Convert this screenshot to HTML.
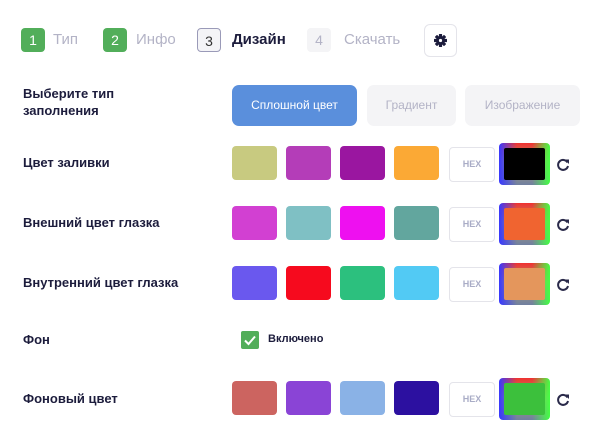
<!DOCTYPE html><html><head><meta charset="utf-8"><style>
body{margin:0;width:600px;height:432px;background:#fff;font-family:"Liberation Sans",sans-serif;position:relative;overflow:hidden}
.a{position:absolute}
.st{width:24px;height:24px;border-radius:4px;color:#fff;font-size:14px;text-align:center;line-height:24px;box-sizing:border-box}
.sl{font-size:15px;color:#b3b3c6;line-height:24px}
.lab{position:absolute;left:23px;font-size:13px;font-weight:bold;color:#1c1c3c}
.sw{position:absolute;width:45px;height:34px;border-radius:4px}
.hex{position:absolute;width:44px;height:33px;border:1px solid #e4e4ea;border-radius:4px;font-size:9px;font-weight:bold;color:#a9acc6;text-align:center;line-height:33px}
.gr{position:absolute;width:51px;height:42px;border-radius:4px;background:linear-gradient(to right,#3838ff,rgba(0,0,0,0) 35%,rgba(0,0,0,0) 65%,#44ff44),linear-gradient(to bottom,#f03030,#b0a070 45%,#7080a0)}
.gr div{position:absolute;left:5px;top:5px;width:41px;height:32px;border-radius:2px}
.rf{position:absolute;width:14px;height:14px}
.btn{position:absolute;height:41px;border-radius:7px;font-size:12px;text-align:center;line-height:41px}
</style></head><body>
<div class="a st" style="left:21px;top:28px;background:#52ae5a">1</div><div class="a sl" style="left:53px;top:28px">Тип</div>
<div class="a st" style="left:103px;top:28px;background:#52ae5a">2</div><div class="a sl" style="left:136px;top:28px">Инфо</div>
<div class="a st" style="left:197px;top:28px;background:#f4f4f7;border:1.5px solid #9a9ab8;color:#333">3</div><div class="a sl" style="left:232px;top:28px;color:#1c1c3c;font-weight:bold">Дизайн</div>
<div class="a st" style="left:307px;top:28px;background:#f4f4f6;color:#b3b3c6">4</div><div class="a sl" style="left:344px;top:28px">Скачать</div>
<div class="a" style="left:424px;top:24px;width:31px;height:31px;border:1px solid #e4e4ea;border-radius:6px"><svg width="31" height="31" viewBox="0 0 31 31"><g transform="translate(15.5 15.5)" fill="#1c1c3c"><circle r="4.5"/><g id="t"><rect x="-1.6" y="-6.5" width="3.2" height="3" rx=".5"/></g><use href="#t" transform="rotate(45)"/><use href="#t" transform="rotate(90)"/><use href="#t" transform="rotate(135)"/><use href="#t" transform="rotate(180)"/><use href="#t" transform="rotate(225)"/><use href="#t" transform="rotate(270)"/><use href="#t" transform="rotate(315)"/><circle r="1.6" fill="#fff"/></g></svg></div>
<div class="lab" style="top:85px;line-height:17px">Выберите тип<br>заполнения</div>
<div class="btn" style="left:232px;top:85px;width:125px;background:#5a8fdc;color:#fff">Сплошной цвет</div>
<div class="btn" style="left:367px;top:85px;width:89px;background:#f4f4f6;color:#b3b3c6">Градиент</div>
<div class="btn" style="left:465px;top:85px;width:115px;background:#f4f4f6;color:#b3b3c6">Изображение</div>

<svg width="0" height="0" style="position:absolute"><defs><g id="r"><path d="M11.5 5.5A5 5 0 1 0 12 9" fill="none" stroke="#2a2a4a" stroke-width="2"/><path d="M8.5 2.5h4.5v4.5z" fill="#2a2a4a"/></g></defs></svg>

<div class="lab" style="top:155px">Цвет заливки</div>
<div class="sw" style="left:232px;top:146px;background:#c8ca80"></div><div class="sw" style="left:286px;top:146px;background:#b43db8"></div><div class="sw" style="left:340px;top:146px;background:#9a16a0"></div><div class="sw" style="left:394px;top:146px;background:#fba935"></div>
<div class="hex" style="left:449px;top:147px">HEX</div><div class="gr" style="left:499px;top:143px"><div style="background:#000"></div></div><svg class="rf" style="left:556px;top:157px" viewBox="0 0 14 14"><use href="#r"/></svg>

<div class="lab" style="top:215px">Внешний цвет глазка</div>
<div class="sw" style="left:232px;top:206px;background:#d240d2"></div><div class="sw" style="left:286px;top:206px;background:#7fc0c4"></div><div class="sw" style="left:340px;top:206px;background:#ee10f0"></div><div class="sw" style="left:394px;top:206px;background:#62a69e"></div>
<div class="hex" style="left:449px;top:207px">HEX</div><div class="gr" style="left:499px;top:203px"><div style="background:#f06430"></div></div><svg class="rf" style="left:556px;top:217px" viewBox="0 0 14 14"><use href="#r"/></svg>

<div class="lab" style="top:275px">Внутренний цвет глазка</div>
<div class="sw" style="left:232px;top:266px;background:#6a58ee"></div><div class="sw" style="left:286px;top:266px;background:#f60a1e"></div><div class="sw" style="left:340px;top:266px;background:#2cc07e"></div><div class="sw" style="left:394px;top:266px;background:#52caf4"></div>
<div class="hex" style="left:449px;top:267px">HEX</div><div class="gr" style="left:499px;top:263px"><div style="background:#e4965c"></div></div><svg class="rf" style="left:556px;top:277px" viewBox="0 0 14 14"><use href="#r"/></svg>

<div class="lab" style="top:332px">Фон</div>
<div class="a" style="left:241px;top:331px;width:18px;height:18px;background:#52ae5a;border-radius:2px"><svg width="18" height="18"><path d="M4 9.5l3.5 3.5 6.5-7.5" fill="none" stroke="#fff" stroke-width="2"/></svg></div>
<div class="a" style="left:268px;top:333px;font-size:11px;font-weight:bold;color:#1c1c3c">Включено</div>

<div class="lab" style="top:391px">Фоновый цвет</div>
<div class="sw" style="left:232px;top:381px;background:#cc6460"></div><div class="sw" style="left:286px;top:381px;background:#8a44d6"></div><div class="sw" style="left:340px;top:381px;background:#8ab2e6"></div><div class="sw" style="left:394px;top:381px;background:#2c10a0"></div>
<div class="hex" style="left:449px;top:382px">HEX</div><div class="gr" style="left:499px;top:378px"><div style="background:#3cc03c"></div></div><svg class="rf" style="left:556px;top:392px" viewBox="0 0 14 14"><use href="#r"/></svg>
</body></html>
